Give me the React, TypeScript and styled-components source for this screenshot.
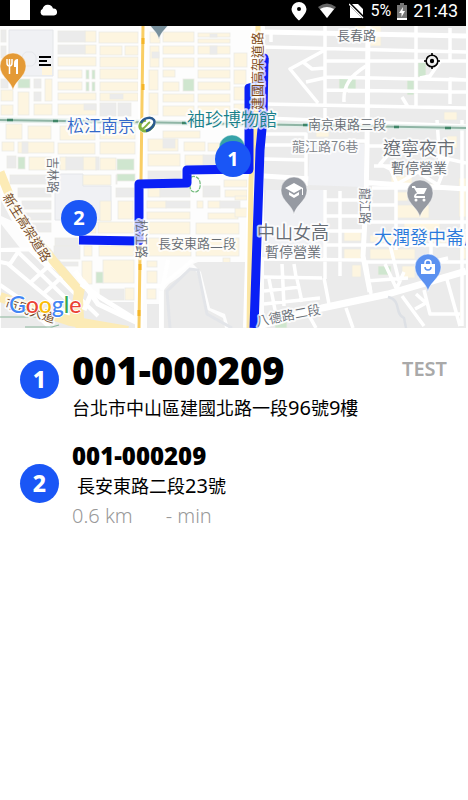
import React from "react";
import styled, { createGlobalStyle } from "styled-components";

const GlobalStyle = createGlobalStyle`
  * { box-sizing: border-box; }
  body { margin: 0; background: #fff; color: #000; font-family: "Noto Sans", "Noto Sans CJK TC", sans-serif; }
  h1, h2, p, ol { margin: 0; padding: 0; }
`;

const Screen = styled.div`
  display: flex;
  flex-direction: column;
  min-height: 100vh;
  padding-right: 2px;
`;

const StatusBar = styled.header`
  display: flex;
  justify-content: space-between;
  height: 26px;
  padding: 0 8px 0 10px;
  background: #000;
  color: #fff;
`;

const StatusGroup = styled.div<{ $gap: number }>`
  display: flex;
  align-items: center;
  gap: ${(p) => p.$gap}px;
  height: ${(p) => (p.$gap > 8 ? 20 : 22)}px;
`;

const Notification = styled.span`
  width: 20px;
  height: 20px;
  background: #fff;
`;

const StatusText = styled.span<{ $size: number }>`
  font: 400 ${(p) => p.$size}px/22px Roboto, sans-serif;
`;

const MapPanel = styled.section`
  position: relative;
  height: 302px;
  overflow: hidden;
`;

const MapCanvas = styled.svg`
  display: block;
  width: 100%;
  height: 100%;
`;

const MapControls = styled.div`
  position: absolute;
  inset: 24px 23px auto 34px;
  display: flex;
  justify-content: space-between;
`;

const IconButton = styled.button`
  display: grid;
  place-items: center;
  width: 22px;
  height: 22px;
  padding: 0;
  border: 0;
  background: none;
  color: #000;
  cursor: pointer;
`;

const MapLabel = styled.text<{ $size: number; $tone?: string; $center?: boolean }>`
  font-family: "Noto Sans CJK TC", sans-serif;
  font-size: ${(p) => p.$size}px;
  font-weight: 350;
  fill: ${(p) => p.$tone ?? "#666c73"};
  stroke: rgba(255, 255, 255, 0.75);
  stroke-width: 4px;
  stroke-linejoin: round;
  paint-order: stroke;
  text-anchor: ${(p) => (p.$center ? "middle" : "start")};
`;

const Brand = styled.text`
  font: 500 23px Lato, sans-serif;
  stroke: #fff;
  stroke-width: 2px;
  stroke-linejoin: round;
  paint-order: stroke;
`;

const PinNumber = styled.text`
  font: 700 20px "Noto Sans", sans-serif;
  fill: #fff;
  text-anchor: middle;
`;

const Stops = styled.ol`
  display: flex;
  flex-direction: column;
  gap: 20px;
  padding: 20px 19px 0 20px;
  list-style: none;
`;

const Stop = styled.li`
  display: grid;
  grid-template-columns: 39px 1fr auto;
  column-gap: 13px;
`;

const StopNumber = styled.span<{ $drop: number }>`
  display: grid;
  place-items: center;
  width: 39px;
  height: 39px;
  margin-top: ${(p) => p.$drop}px;
  border-radius: 50%;
  background: #1a56f6;
  color: #fff;
  font-size: 23px;
  font-weight: 800;
  line-height: 39px;
`;

const StopBody = styled.div`
  display: flex;
  flex-direction: column;
  min-width: 0;
`;

const MainCode = styled.h1`
  font-size: 38px;
  font-weight: 900;
  line-height: 44px;
`;

const SubCode = styled.h2`
  font-size: 24px;
  font-weight: 900;
  line-height: 28px;
`;

const Address = styled.p<{ $indent?: boolean }>`
  padding-left: ${(p) => (p.$indent ? 5 : 0)}px;
  font-family: "Noto Sans CJK TC", sans-serif;
  font-size: 18px;
  font-weight: 400;
  line-height: 30px;
`;

const Digits = styled.span`
  font: 400 20px/28px "Noto Sans", sans-serif;
`;

const Meta = styled.p`
  display: flex;
  gap: 33px;
  color: #999;
  font-size: 20px;
  font-weight: 300;
  line-height: 32px;
`;

const Tag = styled.span`
  color: #a9a9a9;
  font-size: 20px;
  font-weight: 600;
  line-height: 42px;
`;

type Box = [number, number, number, number];

const YELLOW: Box[] = [
  [85, 31, 96, 42], [99, 32, 138, 43], [85, 45, 96, 54], [100, 46, 122, 55], [125, 46, 138, 55],
  [58, 57, 96, 66], [100, 57, 138, 67], [58, 70, 82, 78], [100, 69, 138, 79], [58, 82, 82, 90],
  [100, 82, 138, 91], [58, 93, 96, 100], [100, 93, 138, 101], [58, 104, 96, 115], [45, 79, 52, 101],
  [1, 90, 13, 101], [18, 92, 29, 115], [34, 104, 52, 115], [1, 105, 13, 115],
  [150, 32, 160, 43], [150, 46, 159, 67], [149, 70, 158, 90], [149, 93, 158, 115],
  [163, 32, 194, 42], [163, 46, 194, 54], [163, 58, 194, 67], [163, 70, 175, 77], [163, 82, 179, 91],
  [163, 94, 194, 102], [163, 106, 194, 116], [198, 33, 230, 37], [198, 39, 230, 43], [198, 46, 230, 54],
  [198, 58, 230, 67], [198, 70, 230, 78], [198, 82, 230, 90], [198, 94, 230, 102], [198, 106, 230, 116],
  [234, 53, 247, 67], [234, 70, 246, 84], [234, 87, 245, 100], [234, 104, 245, 116],
  [6, 124, 22, 139], [28, 126, 51, 139], [60, 126, 95, 140], [2, 142, 14, 151], [18, 142, 54, 153],
  [58, 143, 95, 154], [100, 127, 135, 139], [100, 142, 135, 154], [29, 157, 51, 170], [83, 157, 96, 170],
  [100, 158, 116, 170], [60, 157, 66, 170], [83, 175, 111, 185], [148, 139, 178, 151], [148, 154, 180, 166],
  [184, 142, 205, 151], [208, 143, 220, 151], [185, 155, 204, 165], [163, 131, 200, 138],
  [100, 201, 111, 221], [118, 201, 133, 219], [148, 187, 160, 197], [147, 201, 166, 208], [147, 212, 190, 219],
  [208, 201, 220, 208], [208, 213, 238, 219], [197, 201, 203, 208], [224, 180, 247, 187], [225, 190, 247, 197],
  [83, 222, 96, 233], [98, 222, 135, 233], [84, 246, 92, 256], [99, 246, 134, 256],
  [82, 261, 92, 284], [103, 260, 134, 283], [125, 288, 134, 300], [147, 222, 190, 234],
  [147, 238, 191, 256], [147, 261, 157, 267], [147, 271, 157, 283], [147, 289, 156, 299], [196, 223, 239, 234],
  [196, 238, 239, 256], [223, 258, 230, 263], [235, 196, 247, 200], [235, 208, 247, 217],
];

const GREY: Box[] = [
  [1, 30, 6, 42], [1, 46, 6, 58], [58, 31, 85, 42], [58, 45, 85, 54], [110, 94, 123, 99], [84, 104, 96, 110],
  [100, 103, 116, 116], [118, 103, 131, 116], [1, 79, 8, 88], [34, 79, 41, 88], [34, 92, 41, 101],
  [210, 46, 217, 54], [210, 34, 217, 37], [152, 52, 159, 58], [7, 156, 16, 168], [66, 157, 83, 170],
  [22, 142, 28, 153], [116, 175, 117, 184], [116, 188, 134, 197], [10, 175, 50, 184], [18, 188, 51, 197],
  [22, 201, 51, 209], [22, 213, 51, 220], [30, 223, 51, 232], [96, 157, 99, 170], [163, 139, 175, 148],
  [148, 171, 181, 180], [160, 187, 190, 197], [166, 201, 190, 208], [203, 186, 220, 197], [220, 201, 240, 208],
  [203, 155, 216, 165], [55, 238, 78, 246], [40, 262, 78, 266], [54, 246, 80, 259], [100, 289, 124, 300],
  [235, 151, 247, 164],
];

const GREEN: Box[] = [
  [86, 70, 89, 79], [92, 70, 95, 79], [86, 82, 89, 91], [92, 82, 95, 91], [18, 79, 30, 88], [183, 79, 194, 91],
  [18, 157, 25, 169], [117, 159, 134, 170], [117, 174, 135, 181], [96, 272, 103, 283],
];

const EAST_YELLOW: Box[] = [
  [355, 26, 366, 40], [370, 26, 381, 46], [316, 131, 329, 137], [444, 112, 457, 120], [447, 136, 457, 148],
  [391, 176, 412, 188], [413, 184, 434, 187], [397, 192, 408, 201], [397, 205, 429, 218], [459, 178, 466, 217],
  [344, 231, 361, 241], [370, 235, 427, 242], [432, 236, 466, 243], [344, 249, 361, 259], [370, 249, 415, 259],
  [352, 265, 361, 277], [402, 266, 415, 278], [404, 220, 440, 232], [460, 248, 466, 259], [460, 301, 463, 326],
];

const EAST_GREEN: Box[] = [[339, 78, 356, 92], [407, 80, 414, 95], [418, 62, 426, 77], [378, 266, 391, 275], [275, 320, 287, 328]];

const Boxes = ({ items, fill }: { items: Box[]; fill: string }) => (
  <g fill={fill} stroke="#ebeae7" strokeWidth="0.8">
    {items.map(([x1, y1, x2, y2]) => (
      <rect key={`${x1}-${y1}`} x={x1} y={y1} width={x2 - x1} height={y2 - y1} />
    ))}
  </g>
);

const WhiteRoads = () => (
  <g fill="none" stroke="#fff" strokeWidth="3.5" strokeLinejoin="round">
    <path strokeWidth="5" d="M264 32 466 36M368 26 367 150 366 200 363 256 370 292M264 176 466 189" />
    <path d="M271 42V34M264 47 466 52M325 26V104M326 61H466M326 77 466 80M326 90 466 92M264 104 466 108M416 26V108M325 50 290 69 318 103M303 62 312 69 325 68M306 82 324 78M366 66C350 76 343 86 344 102M348 91H370M402 97 408 107H416M450 28V60M466 80 450 79V104M441 60 430 76 420 78" />
    <path d="M264 118 466 126M264 134H306V186M264 145H310M264 159 306 160M308 141H366M325 108V122M368 146H404L444 158 466 163M374 166H396M372 188H466M368 205H396M396 188V250M392 170 380 164 394 148M390 168 397 184 418 172 438 185 448 160M437 120 440 164M462 120V326M368 222H466M340 191V276M325 190V276M264 259 366 260M325 200H364M326 216H364M326 231H364M326 245H466M366 262H466M366 281 408 278M325 240V279M294 264 296 277M264 277 322 278M269 279 275 310M282 264 284 306M297 279 302 302M324 278 329 304M264 291 300 287M264 304 320 298M366 262 371 294M390 245 399 281M385 264 398 292M404 272 396 290M431 238V262L448 258M446 276 460 326M402 296 424 326M416 294 426 303 415 309M306 310 316 328M346 308 353 328M424 290 430 314H460" />
    <path strokeWidth="7" d="M252 328 322 308 388 294 466 271" />
    <path stroke="#dde0e5" strokeWidth="2.5" d="M388 297C402 300 394 314 404 318L406 328" />
  </g>
);

const SouthWest = () => (
  <g>
    <path fill="#ebebeb" d="M1 224 20 248 50 248 84 290 135 318V328H1ZM1 200 12 221 1 216Z" />
    <path fill="#ebebeb" d="M100 302H134V318L114 312ZM147 304H161V328H147ZM169 284 193 268 198 274 206 309 223 318 225 328H164V290ZM198 262H252V328H229L225 314 210 308 201 272 193 264Z" />
    <g fill="none" stroke="#fff" strokeWidth="4">
      <path d="M0 250 40 249M18 252 10 264 0 262M18 252 76 308M8 264 84 328M28 248 98 316M42 295 63 276M30 283 54 261M0 285 22 300 50 328" />
      <path strokeWidth="5" d="M0 186 16 220 38 254 64 274M75 271 98 304 140 324" />
      <path d="M161 291V328M168 260 162 290M146 286H161L193 260" />
      <path strokeWidth="3" stroke="#e3e5e9" d="M170 328 167 291 190 269 198 270 207 314 232 328" />
    </g>
    <path fill="none" stroke="#fcebb6" strokeWidth="9" d="M0 172 12 202 28 229 56 264 78 289 80 328" />
    <path fill="none" stroke="#fcebb6" strokeWidth="10" d="M0 297 34 309 70 321 128 331M80 288 73 324" />
    <path fill="none" stroke="#fff" strokeWidth="5" d="M81 284 98 296 138 321M84 310 92 292 82 280" />
    <path fill="none" stroke="#89b69b" strokeWidth="1.2" d="M0 317H38M25 327H52L59 325" />
  </g>
);

const Pin = ({ x, y, color, children }: { x: number; y: number; color: string; children?: React.ReactNode }) => (
  <g transform={`translate(${x} ${y})`}>
    <path fill={color} stroke="#fff" strokeOpacity="0.6" strokeWidth="0.8" d="M0 24.500C-1.500 15-13 11-13 0A13 13 0 0 1 13 0C13 11 1.500 15 0 24.500Z" />
    {children}
  </g>
);

const StopPin = ({ x, y, n }: { x: number; y: number; n: number }) => (
  <g>
    <circle cx={x} cy={y} r="18" fill="#1a56f6" />
    <PinNumber x={x} y={y + 7}>{n}</PinNumber>
  </g>
);

const RouteMap = () => (
  <MapCanvas viewBox="0 26 466 302" preserveAspectRatio="xMidYMid slice" role="img" aria-label="Route map">
    <rect y="26" width="466" height="302" fill="#fdfdfd" />
    <path fill="#f0f1f4" stroke="#e4e6e9" d="M9 30H53V76H9ZM55 174H83V186H111V220H55Z" />
    <path fill="none" stroke="#e5e7eb" d="M26 52H32A8 8 0 0 1 32 66H26A8 8 0 0 1 26 52Z" />
    <rect x="42" y="67" width="10" height="8" fill="#fff5dd" />
    <Boxes items={YELLOW} fill="#fdf5e0" />
    <Boxes items={GREY} fill="#ebebeb" />
    <Boxes items={GREEN} fill="#cfe6cf" />
    <SouthWest />
    <rect x="264" y="26" width="202" height="302" fill="#ebebeb" />
    <Boxes items={EAST_YELLOW} fill="#fdf5e0" />
    <Boxes items={EAST_GREEN} fill="#cfe6cf" />
    <WhiteRoads />
    <path fill="#f0f1f4" d="M310 144H364V187L308 185ZM266 190H323V257H262Z" />
    <path fill="none" stroke="#fff" strokeWidth="8" d="M143 26 141 180 139 328" />
    <path fill="none" stroke="#f9ce65" strokeWidth="3" d="M143 26 141 180 139 328" />
    <path fill="none" stroke="#f5b62a" strokeWidth="3" d="M143 38V44M143 84V90M140 264V270M139 310V316" />
    <path fill="none" stroke="#fff" strokeWidth="14" d="M258 26 256 130 250 328" />
    <path fill="none" stroke="#fbe6a5" strokeWidth="5" d="M258 26 257 100 251 180 249 328" />
    <path fill="none" stroke="#e3eeea" strokeWidth="5" d="M0 120 190 123 466 128" />
    <path fill="none" stroke="#8fb5a5" strokeWidth="2" d="M0 120 190 123 466 128" />
    <path fill="none" stroke="#3f8567" strokeWidth="2.500" d="M7 120H13M53 121H58M182 123H187M303 125H308M394 127H399M445 128H451" />
    <path fill="none" stroke="#77bd80" strokeWidth="1.300" strokeDasharray="4 1" d="M191 177C202 173 203 192 195 192C188 192 190 182 191 177Z" />

    <Pin x={232} y={148} color="#36a2a8" />
    <g fill="none" stroke="#0a20f5" strokeWidth="9" strokeLinejoin="round">
      <path d="M79 240 139 241V184L187 183V170L249 169V88L264 84" />
      <path d="M264 58 263 118 260 150 254 328" />
      <path strokeLinecap="round" d="M264 58V62" />
    </g>
    <path fill="#0a20f5" d="M244.500 160H253V170A4 4 0 0 1 249 174H240Z" />

    <MapLabel $size={13} x="337" y="40">長春路</MapLabel>
    <MapLabel $size={13} x="308" y="129">南京東路三段</MapLabel>
    <MapLabel $size={13} x="292" y="151" $tone="#7b8187">龍江路76巷</MapLabel>
    <MapLabel $size={18} x="383" y="155">遼寧夜市</MapLabel>
    <MapLabel $size={14} x="391" y="173">暫停營業</MapLabel>
    <MapLabel $size={18} x="257" y="239">中山女高</MapLabel>
    <MapLabel $size={14} x="265" y="257">暫停營業</MapLabel>
    <MapLabel $size={13} x="158" y="248">長安東路二段</MapLabel>
    <MapLabel $size={17} x="67" y="132" $tone="#3268ca">松江南京</MapLabel>
    <MapLabel $size={18} x="187" y="126" $tone="#18808a">袖珍博物館</MapLabel>
    <MapLabel $size={18} x="374" y="244" $tone="#2878dc">大潤發中崙店</MapLabel>
    <MapLabel $size={12} $center transform="translate(48 175) rotate(90)">吉林路</MapLabel>
    <MapLabel $size={12} $center transform="translate(360 206) rotate(90)">龍江路</MapLabel>
    <MapLabel $size={13} $center transform="translate(137 239) rotate(90)">松江路</MapLabel>
    <MapLabel $size={13} $center $tone="#79450f" transform="translate(262 71) rotate(-90)">建國高架道路</MapLabel>
    <MapLabel $size={13} $center $tone="#70431b" transform="translate(23 230) rotate(58)">新生高架道路</MapLabel>
    <MapLabel $size={13} $center transform="translate(289 320) rotate(-11)">八德路二段</MapLabel>
    <MapLabel $size={13} $center $tone="#70431b" transform="translate(29 315) rotate(18)">市民大道</MapLabel>

    <StopPin x={233} y={159} n={1} />
    <StopPin x={79} y={218} n={2} />

    <g transform="translate(147 125)" fill="none">
      <circle r="9" fill="#fff" />
      <path stroke="#83b341" strokeWidth="3" d="M-1-5C-7-4-9 2-5 5C-1 8 6 3 7-1" />
      <path stroke="#2a5a91" strokeWidth="2.500" d="M-6-2C-4-7 4-9 7-5C9-1 4 5-1 6" />
      <path stroke="#83b341" strokeWidth="2" d="M-5 4C-2 3 0-1 3-3" />
    </g>
    <Pin x={13} y={66} color="#e49a36">
      <path fill="none" stroke="#fff" strokeWidth="1.500" d="M-6-7V-3Q-6 0-3.500 0Q-1 0-1-3V-7M-3.500-7V8" />
      <path fill="#fff" d="M5-7V8H3V1H1V-3Q1-7 5-7Z" />
    </Pin>
    <Pin x={159} y={15} color="#78909c" />
    <Pin x={294} y={190} color="#969aa2">
      <path fill="#fff" d="M0-7 9-2 0 3-9-2ZM-5 2 0 5 5 2V5L0 8-5 5ZM8-2H9V5H8Z" />
    </Pin>
    <Pin x={420} y={193} color="#969aa2">
      <path fill="#fff" d="M-8-7H-5L-4-5H7L4 1H-3L-4 3H5V5H-5Q-7 4-5 1L-3 0-6-5H-8Z" />
      <circle cx="-4" cy="7" r="1.500" fill="#fff" />
      <circle cx="4" cy="7" r="1.500" fill="#fff" />
    </Pin>
    <Pin x={428} y={267} color="#5b91f0">
      <path fill="#fff" d="M-7-3H7V7H-7Z" />
      <path fill="none" stroke="#fff" strokeWidth="1.500" d="M-3-3V-4A3 3 0 0 1 3-4V-3" />
      <path fill="none" stroke="#5b91f0" strokeWidth="1.500" d="M-3 0A3 3 0 0 0 3 0" />
    </Pin>

    <Brand x="9" y="313">
      <tspan fill="#4285f4">G</tspan>
      <tspan fill="#ea4335">o</tspan>
      <tspan fill="#fbbc05">o</tspan>
      <tspan fill="#4285f4">g</tspan>
      <tspan fill="#34a853">l</tspan>
      <tspan fill="#ea4335">e</tspan>
    </Brand>
  </MapCanvas>
);

const StatusIcons = () => (
  <StatusGroup $gap={6}>
    <svg width="16" height="20" viewBox="0 0 16 20" fill="#fff">
      <path fillRule="evenodd" d="M8 1A7.500 7.500 0 0 1 15.500 8C15.500 13 8 19.500 8 19.500S.500 13 .500 8A7.500 7.500 0 0 1 8 1ZM8 6A2 2 0 1 0 8 10A2 2 0 0 0 8 6Z" />
    </svg>
    <svg width="30" height="16" viewBox="0 0 30 16">
      <path fill="#666" d="M5 4Q14-3 23 4L14 15Z" />
      <path fill="#fff" d="M7 6Q14 2 21 6L14 15Z" />
    </svg>
    <svg width="15" height="16" viewBox="0 0 15 16">
      <path fill="#fff" d="M3 1H9L14 6V12L3 1ZM1 3 13 15H1Z" />
      <path stroke="#fff" strokeWidth="1.300" d="M0 1 14 15" />
    </svg>
    <StatusText $size={16}>5%</StatusText>
    <svg width="10" height="17" viewBox="0 0 10 17">
      <path fill="#777" d="M3 0H7V2H10V17H0V2H3Z" />
      <path fill="#fff" d="M0 15H10V17H0ZM6 4 2 10H4.500V14L8 8H5.500Z" />
    </svg>
    <StatusText $size={18}>21:43</StatusText>
  </StatusGroup>
);

export default function App() {
  return (
    <Screen>
      <GlobalStyle />
      <StatusBar>
        <StatusGroup $gap={9}>
          <Notification />
          <svg width="19" height="12" viewBox="0 0 19 12" fill="#fff">
            <path d="M4 11.500A3.500 3.500 0 0 1 3.500 5A5.500 5.500 0 0 1 14 4.500A3.500 3.500 0 0 1 15 11.500Z" />
          </svg>
        </StatusGroup>
        <StatusIcons />
      </StatusBar>
      <MapPanel>
        <RouteMap />
        <MapControls>
          <IconButton type="button" aria-label="Menu">
            <svg width="14" height="12" viewBox="0 0 14 12" stroke="currentColor" strokeWidth="2">
              <path d="M1 2H13M1 6H9M1 10H13" />
            </svg>
          </IconButton>
          <IconButton type="button" aria-label="My location">
            <svg width="18" height="18" viewBox="0 0 18 18" fill="none" stroke="currentColor" strokeWidth="1.600">
              <circle cx="9" cy="9" r="5.800" />
              <circle cx="9" cy="9" r="2.200" fill="currentColor" stroke="none" />
              <path d="M9 1V4M9 14V17M1 9H4M14 9H17" />
            </svg>
          </IconButton>
        </MapControls>
      </MapPanel>
      <Stops>
        <Stop>
          <StopNumber $drop={12}>1</StopNumber>
          <StopBody>
            <MainCode>001-000209</MainCode>
            <Address>台北市中山區建國北路一段<Digits>96</Digits>號<Digits>9</Digits>樓</Address>
          </StopBody>
          <Tag>TEST</Tag>
        </Stop>
        <Stop>
          <StopNumber $drop={22}>2</StopNumber>
          <StopBody>
            <SubCode>001-000209</SubCode>
            <Address $indent>長安東路二段<Digits>23</Digits>號</Address>
            <Meta>
              <span>0.6 km</span>
              <span>- min</span>
            </Meta>
          </StopBody>
        </Stop>
      </Stops>
    </Screen>
  );
}
